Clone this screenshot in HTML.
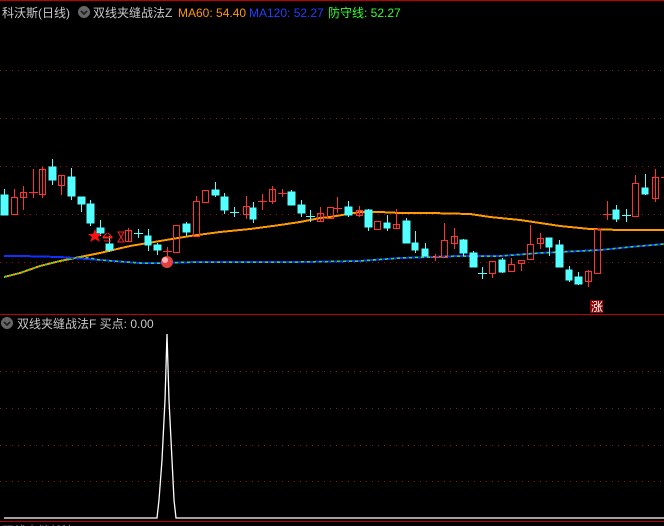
<!DOCTYPE html>
<html><head><meta charset="utf-8"><style>
html,body{margin:0;padding:0;background:#000;width:664px;height:526px;overflow:hidden}
svg{display:block}
text{font-family:"Liberation Sans","Noto Sans CJK SC",sans-serif;font-size:12px}
</style></head><body>
<svg width="664" height="526" viewBox="0 0 664 526" xmlns="http://www.w3.org/2000/svg" shape-rendering="crispEdges">
<rect width="664" height="526" fill="#000"/>
<line x1="0" y1="0.5" x2="664" y2="0.5" stroke="#c00000"/>
<g stroke="#a01010" stroke-dasharray="1,5">
<line x1="0" y1="70.5" x2="664" y2="70.5"/><line x1="0" y1="118.5" x2="664" y2="118.5"/>
<line x1="0" y1="166.5" x2="664" y2="166.5"/><line x1="0" y1="214.5" x2="664" y2="214.5"/>
<line x1="0" y1="262.5" x2="664" y2="262.5"/>
<line x1="0" y1="371.5" x2="664" y2="371.5"/><line x1="0" y1="408.5" x2="664" y2="408.5"/>
<line x1="0" y1="445.5" x2="664" y2="445.5"/><line x1="0" y1="481.5" x2="664" y2="481.5"/>
</g>
<line x1="0" y1="314.5" x2="664" y2="314.5" stroke="#c00000"/>
<line x1="0" y1="521.5" x2="664" y2="521.5" stroke="#c00000"/>
<text x="2" y="17" fill="#c8c8c8">科沃斯(日线)</text>
<circle cx="84" cy="12" r="6" fill="#666"/><path d="M81 11l3 3 3-3" stroke="#222" stroke-width="1.5" fill="none"/>
<text x="93" y="17" fill="#c8c8c8">双线夹缝战法Z</text>
<text x="178" y="17" fill="#ff9900">MA60: 54.40</text>
<text x="249" y="17" fill="#2040ff">MA120: 52.27</text>
<text x="328" y="17" fill="#33ff33">防守线: 52.27</text>
<circle cx="7" cy="323" r="6" fill="#666"/><path d="M4 322l3 3 3-3" stroke="#222" stroke-width="1.5" fill="none"/>
<text x="17" y="328" fill="#c8c8c8">双线夹缝战法F  买点: 0.00</text>
<polyline fill="none" stroke="#ff9900" stroke-width="2" points="4,277 20,273 40,266 60,261 80,257 100,253 130,246 160,241 190,236 220,232 250,229 280,225 300,222 320,218 330,217 360,212 380,212 400,213 430,213 470,214 490,217 520,220 560,226 590,229 620,230 664,230"/>
<polyline fill="none" stroke="#1030ff" stroke-width="2" points="4,256 20,256 60,257 100,260 140,263 160,263 200,262 300,262 360,261 400,258 460,256 500,256 540,253 580,251 600,250 630,247 664,244"/>
<polyline fill="none" stroke="#33dd33" stroke-width="1.5" stroke-dasharray="3,3" points="4,277 20,273 40,266 60,261 80,257 90,258 100,260 140,263 160,263 200,262 300,262 360,261 400,258 460,256 500,256 540,253 580,251 600,250 630,247 664,244"/>
<g fill="#54ffff" stroke="#54ffff">
<line x1="4.5" y1="189" x2="4.5" y2="215"/><rect x="1" y="195" width="7" height="20"/>
<line x1="52.5" y1="159" x2="52.5" y2="185"/><rect x="49" y="167" width="7" height="13"/>
<line x1="71.5" y1="168" x2="71.5" y2="200"/><rect x="68" y="177" width="7" height="19"/>
<line x1="81.5" y1="197" x2="81.5" y2="212"/><rect x="78" y="197" width="7" height="7"/>
<line x1="90.5" y1="200" x2="90.5" y2="226"/><rect x="87" y="204" width="7" height="19"/>
<line x1="100.5" y1="220" x2="100.5" y2="236"/><rect x="97" y="228" width="7" height="5"/>
<line x1="109.5" y1="236" x2="109.5" y2="252"/><rect x="106" y="244" width="7" height="6"/>
<line x1="138.5" y1="229" x2="138.5" y2="238"/><line x1="134" y1="233.5" x2="143" y2="233.5"/>
<line x1="148.5" y1="229" x2="148.5" y2="251"/><rect x="145" y="236" width="6" height="9"/>
<line x1="157.5" y1="243" x2="157.5" y2="255"/><rect x="154" y="245" width="7" height="5"/>
<line x1="186.5" y1="222" x2="186.5" y2="236"/><rect x="183" y="224" width="7" height="8"/>
<line x1="215.5" y1="182" x2="215.5" y2="197"/><rect x="212" y="190" width="7" height="5"/>
<line x1="224.5" y1="193" x2="224.5" y2="214"/><rect x="221" y="197" width="7" height="13"/>
<line x1="234.5" y1="207" x2="234.5" y2="217"/><line x1="230" y1="212.5" x2="239" y2="212.5"/>
<line x1="253.5" y1="202" x2="253.5" y2="223"/><rect x="250" y="208" width="6" height="11"/>
<line x1="291.5" y1="190" x2="291.5" y2="205"/><rect x="288" y="192" width="7" height="13"/>
<line x1="301.5" y1="200" x2="301.5" y2="217"/><rect x="298" y="205" width="7" height="8"/>
<line x1="310.5" y1="210" x2="310.5" y2="222"/><line x1="306" y1="216.5" x2="315" y2="216.5"/>
<line x1="348.5" y1="201" x2="348.5" y2="217"/><rect x="345" y="207" width="7" height="8"/>
<line x1="368.5" y1="209" x2="368.5" y2="231"/><rect x="365" y="210" width="7" height="17"/>
<line x1="387.5" y1="215" x2="387.5" y2="231"/><rect x="384" y="223" width="6" height="5"/>
<line x1="406.5" y1="218" x2="406.5" y2="243"/><rect x="403" y="221" width="7" height="22"/>
<line x1="415.5" y1="231" x2="415.5" y2="253"/><rect x="412" y="243" width="6" height="7"/>
<line x1="425.5" y1="243" x2="425.5" y2="256"/><rect x="422" y="249" width="6" height="7"/>
<line x1="463.5" y1="239" x2="463.5" y2="256"/><rect x="460" y="240" width="7" height="13"/>
<line x1="473.5" y1="251" x2="473.5" y2="267"/><rect x="470" y="253" width="7" height="14"/>
<line x1="482.5" y1="267" x2="482.5" y2="279"/><line x1="478" y1="273.5" x2="487" y2="273.5"/>
<line x1="502.5" y1="258" x2="502.5" y2="273"/><rect x="499" y="260" width="6" height="12"/>
<line x1="549.5" y1="238" x2="549.5" y2="256"/><rect x="546" y="238" width="6" height="9"/>
<line x1="559.5" y1="240" x2="559.5" y2="267"/><rect x="556" y="245" width="7" height="22"/>
<line x1="569.5" y1="266" x2="569.5" y2="282"/><rect x="566" y="270" width="6" height="10"/>
<line x1="578.5" y1="272" x2="578.5" y2="285"/><rect x="575" y="277" width="7" height="7"/>
<line x1="616.5" y1="205" x2="616.5" y2="222"/><rect x="613" y="210" width="6" height="9"/>
<line x1="626.5" y1="209" x2="626.5" y2="222"/><line x1="622" y1="215.5" x2="631" y2="215.5"/>
<line x1="645.5" y1="174" x2="645.5" y2="195"/><rect x="642" y="188" width="6" height="6"/>
</g>
<g fill="none" stroke="#ff3232">
<line x1="14.5" y1="189" x2="14.5" y2="197"/><rect x="11.5" y="197.5" width="6" height="17"/>
<line x1="23.5" y1="186" x2="23.5" y2="210"/><rect x="20.5" y="192.5" width="6" height="5"/>
<line x1="33.5" y1="169" x2="33.5" y2="198"/><line x1="29" y1="192.5" x2="38" y2="192.5"/>
<line x1="42.5" y1="167" x2="42.5" y2="198"/><rect x="39.5" y="169.5" width="6" height="25"/>
<line x1="61.5" y1="175" x2="61.5" y2="195"/><rect x="58.5" y="175.5" width="6" height="10"/>
<line x1="128.5" y1="228" x2="128.5" y2="242"/><rect x="125.5" y="230.5" width="6" height="11"/>
<line x1="167.5" y1="247" x2="167.5" y2="256"/><line x1="163" y1="251.5" x2="172" y2="251.5"/>
<rect x="173.5" y="225.5" width="6" height="27"/>
<line x1="196.5" y1="196" x2="196.5" y2="201"/><rect x="193.5" y="201.5" width="6" height="35"/>
<rect x="202.5" y="190.5" width="6" height="12"/>
<line x1="246.5" y1="196" x2="246.5" y2="219"/><rect x="243.5" y="206.5" width="6" height="8"/>
<line x1="262.5" y1="194" x2="262.5" y2="210"/><line x1="258" y1="201.5" x2="267" y2="201.5"/>
<line x1="272.5" y1="186" x2="272.5" y2="204"/><rect x="269.5" y="189.5" width="6" height="12"/>
<line x1="282.5" y1="189" x2="282.5" y2="197"/><line x1="278" y1="193.5" x2="287" y2="193.5"/>
<line x1="320.5" y1="207" x2="320.5" y2="221"/><rect x="317.5" y="213.5" width="6" height="8"/>
<rect x="327.5" y="207.5" width="6" height="11"/>
<line x1="337.5" y1="197" x2="337.5" y2="213"/><line x1="333" y1="208.5" x2="342" y2="208.5"/>
<line x1="359.5" y1="206" x2="359.5" y2="217"/><rect x="356.5" y="210.5" width="6" height="5"/>
<rect x="374.5" y="221.5" width="6" height="8"/>
<line x1="396.5" y1="209" x2="396.5" y2="228"/><rect x="393.5" y="224.5" width="6" height="4"/>
<line x1="435.5" y1="254" x2="435.5" y2="261"/><line x1="431" y1="257.5" x2="440" y2="257.5"/>
<line x1="444.5" y1="223" x2="444.5" y2="240"/><rect x="441.5" y="240.5" width="6" height="17"/>
<line x1="454.5" y1="228" x2="454.5" y2="249"/><rect x="451.5" y="236.5" width="6" height="7"/>
<line x1="492.5" y1="273" x2="492.5" y2="278"/><rect x="489.5" y="261.5" width="6" height="12"/>
<line x1="511.5" y1="258" x2="511.5" y2="264"/><rect x="508.5" y="264.5" width="6" height="7"/>
<line x1="521.5" y1="263" x2="521.5" y2="271"/><rect x="518.5" y="260.5" width="6" height="3"/>
<line x1="530.5" y1="225" x2="530.5" y2="244"/><rect x="527.5" y="244.5" width="6" height="15"/>
<line x1="540.5" y1="233" x2="540.5" y2="249"/><rect x="537.5" y="238.5" width="6" height="5"/>
<line x1="588.5" y1="270" x2="588.5" y2="287"/><rect x="585.5" y="271.5" width="6" height="10"/>
<rect x="594.5" y="229.5" width="6" height="44"/>
<line x1="607.5" y1="201" x2="607.5" y2="220"/><line x1="603" y1="214.5" x2="612" y2="214.5"/>
<line x1="635.5" y1="175" x2="635.5" y2="183"/><rect x="632.5" y="183.5" width="6" height="33"/>
<line x1="655.5" y1="169" x2="655.5" y2="202"/><rect x="652.5" y="177.5" width="6" height="21"/>
<line x1="661" y1="177.5" x2="664" y2="177.5"/>
</g>
<polygon points="95,229 97,234 102,234 98,237 100,242 95,239 90,242 92,237 88,234 93,234" fill="#ff1010" shape-rendering="auto"/>
<path d="M103 238h9M107 233l-4 4h9l-4-4M104 241h7M118 232h6l-3 5 3 5h-6l3-5z" stroke="#ff2020" fill="none" shape-rendering="auto"/>
<circle cx="167" cy="262" r="6" fill="#e04040" shape-rendering="auto"/>
<circle cx="165" cy="260" r="3" fill="#ffb0b0" shape-rendering="auto"/>
<rect x="590" y="300" width="13" height="13" fill="#8b0000"/>
<text x="591" y="311" fill="#fff" font-size="11">涨</text>
<polyline fill="none" stroke="#fff" stroke-width="1.3" shape-rendering="auto" points="4,518 157,518 159,500 162,460 165,400 167,334 169,400 172,460 174,500 176,518 664,518"/>
<text x="2" y="535" fill="#888">双线夹缝战法</text>
</svg>
</body></html>
